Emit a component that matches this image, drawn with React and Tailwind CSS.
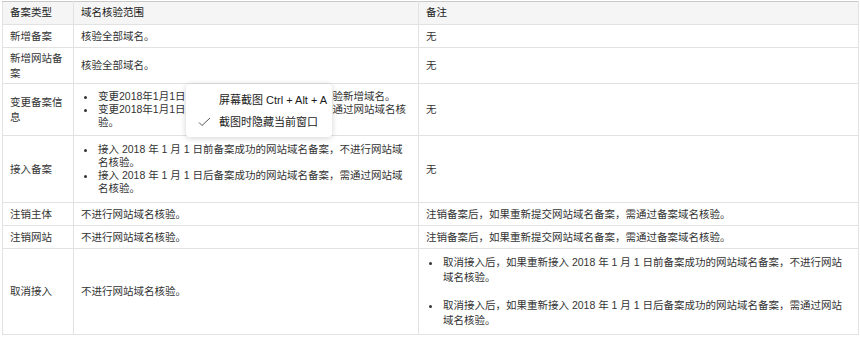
import React from 'react';

const rows = [
  { type: '新增备案', scope: '核验全部域名。', note: '无', h: 'h-[23px]' },
  { type: '新增网站备案', scope: '核验全部域名。', note: '无', h: 'h-[36px]' },
  {
    type: '变更备案信息',
    scope: [
      '变更2018年1月1日前备案成功的网站域名备案，核验新增域名。',
      '变更2018年1月1日后备案成功的网站域名备案，需通过网站域名核验。',
    ],
    note: '无',
    h: 'h-[52px]',
  },
  {
    type: '接入备案',
    scope: [
      '接入 2018 年 1 月 1 日前备案成功的网站域名备案，不进行网站域名核验。',
      '接入 2018 年 1 月 1 日后备案成功的网站域名备案，需通过网站域名核验。',
    ],
    note: '无',
    h: 'h-[67px]',
  },
  { type: '注销主体', scope: '不进行网站域名核验。', note: '注销备案后，如果重新提交网站域名备案，需通过备案域名核验。', h: 'h-[23px]' },
  { type: '注销网站', scope: '不进行网站域名核验。', note: '注销备案后，如果重新提交网站域名备案，需通过备案域名核验。', h: 'h-[23px]' },
  {
    type: '取消接入',
    scope: '不进行网站域名核验。',
    note: [
      '取消接入后，如果重新接入 2018 年 1 月 1 日前备案成功的网站域名备案，不进行网站域名核验。',
      '取消接入后，如果重新接入 2018 年 1 月 1 日后备案成功的网站域名备案，需通过网站域名核验。',
    ],
    spaced: true,
    h: 'h-[86px]',
  },
];

const Cell = ({ value, spaced }) => {
  if (Array.isArray(value)) {
    return (
      <ul className={`list-disc pl-[16px] ${spaced ? 'space-y-[13px] leading-[15px]' : 'leading-[13px]'}`}>
        {value.map((v, i) => (
          <li key={i} className="pl-[1px]">{v}</li>
        ))}
      </ul>
    );
  }
  return value;
};

export default function App() {
  return (
    <div className="relative bg-white w-[860px] h-[339px] pt-px pl-[2px] text-[10.5px] text-[#333] font-['Liberation_Sans','Noto_Sans_CJK_SC',sans-serif]">
      <table className="table-fixed border-collapse w-[856px] border-t border-t-[#c9c9c9]">
        <colgroup>
          <col className="w-[71px]" />
          <col className="w-[345px]" />
          <col className="w-[440px]" />
        </colgroup>
        <thead>
          <tr className="h-[23px] bg-[#f5f5f5]">
            <th className="border border-[#e2e2e2] border-t-[#c9c9c9] text-left font-normal px-[7px] text-[#222]">备案类型</th>
            <th className="border border-[#e2e2e2] border-t-[#c9c9c9] text-left font-normal px-[7px] text-[#222]">域名核验范围</th>
            <th className="border border-[#e2e2e2] border-t-[#c9c9c9] text-left font-normal px-[7px] text-[#222]">备注</th>
          </tr>
        </thead>
        <tbody>
          {rows.map((r) => (
            <tr key={r.type} className={r.h}>
              <td className="border border-[#e2e2e2] pl-[7px] pr-[9px] leading-[15px] align-middle">{r.type}</td>
              <td className="border border-[#e2e2e2] px-[7px] leading-[15px] align-middle">
                <Cell value={r.scope} />
              </td>
              <td className="border border-[#e2e2e2] px-[7px] leading-[15px] align-middle">
                <Cell value={r.note} spaced={r.spaced} />
              </td>
            </tr>
          ))}
        </tbody>
      </table>

      <div className="absolute left-[186px] top-[84px] w-[146px] h-[53px] bg-white rounded-[4px] shadow-[0_1px_6px_rgba(0,0,0,0.18)] text-[11px] text-[#1a1a1a] flex flex-col justify-center gap-[8px]">
        <div className="pl-[33px] leading-[14px]">屏幕截图 Ctrl + Alt + A</div>
        <div className="flex items-center leading-[14px]">
          <svg width="33" height="12" viewBox="0 0 33 12" className="shrink-0">
            <path d="M13 6.5 L16 9.5 L24 2" fill="none" stroke="#555" strokeWidth="1" />
          </svg>
          <span>截图时隐藏当前窗口</span>
        </div>
      </div>
    </div>
  );
}
